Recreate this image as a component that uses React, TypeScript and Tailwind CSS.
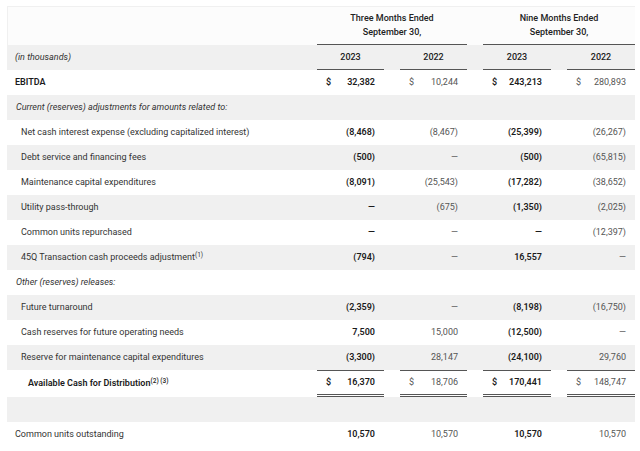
import React from 'react';

type RowProps = {
  label: React.ReactNode;
  values?: string[];
  gray?: boolean;
  indent?: number;
  italic?: boolean;
  bold?: boolean;
  dollar?: boolean;
  total?: boolean;
};

const widths = ['w-[67px]', 'w-[67px]', 'w-[68px]', 'w-[68px]'];

function Cell({ value, idx, dollar, total }: { value: string; idx: number; dollar?: boolean; total?: boolean }) {
  const strong = idx % 2 === 0;
  return (
    <div
      className={`${widths[idx]} h-full flex items-center justify-between px-[9px] ${
        strong ? 'font-semibold text-[#1b1b1b]' : 'text-[#555]'
      } ${total ? 'border-t border-b-[3px] border-double border-t-[#555] border-b-[#555]' : ''}`}
      style={total ? { borderTopStyle: 'solid' } : undefined}
    >
      <span>{dollar ? '$' : ''}</span>
      <span>{value}</span>
    </div>
  );
}

function Row({ label, values, gray, indent = 0, italic, bold, dollar, total }: RowProps) {
  const pad = ['pl-[8px]', 'pl-[9px]', 'pl-[14px]', 'pl-[21px]'][indent];
  return (
    <div className={`flex items-center ${total ? 'h-[27px]' : 'h-[25px]'} ${gray ? 'bg-[#f0f0f0]' : 'bg-white'}`}>
      <div className={`w-[310px] ${pad} ${italic ? 'italic' : ''} ${bold ? 'font-semibold text-[#1b1b1b]' : 'text-[#333]'}`}>
        {label}
      </div>
      {values ? (
        <>
          <Cell value={values[0]} idx={0} dollar={dollar} total={total} />
          <div className="w-4" />
          <Cell value={values[1]} idx={1} dollar={dollar} total={total} />
          <div className="w-4" />
          <Cell value={values[2]} idx={2} dollar={dollar} total={total} />
          <div className="w-4" />
          <Cell value={values[3]} idx={3} dollar={dollar} total={total} />
        </>
      ) : null}
    </div>
  );
}

const D = '—';

export default function App() {
  return (
    <div className="bg-white w-[640px] h-[451px] pt-[6px] pl-[7px] text-[9px] leading-none" style={{ fontFamily: 'Roboto, "Liberation Sans", sans-serif' }}>
      <div className="w-[628px]">
        {/* column group headers */}
        <div className="flex h-[39px] bg-[#fcfcfc] border-t border-l border-[#f0f0f0]">
          <div className="w-[309px]" />
          <div className="w-[150px] border-b border-[#555] flex flex-col items-center justify-center gap-[5px] font-medium text-[#222]">
            <span>Three Months Ended</span>
            <span>September 30,</span>
          </div>
          <div className="w-4" />
          <div className="w-[152px] border-b border-[#555] flex flex-col items-center justify-center gap-[5px] font-medium text-[#222]">
            <span>Nine Months Ended</span>
            <span>September 30,</span>
          </div>
        </div>

        {/* years */}
        <div className="flex items-center h-[25px] bg-[#f0f0f0]">
          <div className="w-[310px] pl-[8px] italic text-[#333]">(in thousands)</div>
          {['2023', '2022', '2023', '2022'].map((y, i) => (
            <React.Fragment key={i}>
              {i > 0 && <div className="w-4" />}
              <div className={`${widths[i]} h-full flex items-center justify-center border-b border-[#555] font-medium text-[#222]`}>{y}</div>
            </React.Fragment>
          ))}
        </div>

        <Row label="EBITDA" bold dollar values={['32,382', '10,244', '243,213', '280,893']} />
        <Row label="Current (reserves) adjustments for amounts related to:" gray italic indent={1} />
        <Row label="Net cash interest expense (excluding capitalized interest)" indent={2} values={['(8,468)', '(8,467)', '(25,399)', '(26,267)']} />
        <Row label="Debt service and financing fees" gray indent={2} values={['(500)', D, '(500)', '(65,815)']} />
        <Row label="Maintenance capital expenditures" indent={2} values={['(8,091)', '(25,543)', '(17,282)', '(38,652)']} />
        <Row label="Utility pass-through" gray indent={2} values={[D, '(675)', '(1,350)', '(2,025)']} />
        <Row label="Common units repurchased" indent={2} values={[D, D, D, '(12,397)']} />
        <Row
          label={
            <>
              45Q Transaction cash proceeds adjustment<sup className="text-[6.5px] -top-[3px]">(1)</sup>
            </>
          }
          gray
          indent={2}
          values={['(794)', D, '16,557', D]}
        />
        <Row label="Other (reserves) releases:" italic indent={1} />
        <Row label="Future turnaround" gray indent={2} values={['(2,359)', D, '(8,198)', '(16,750)']} />
        <Row label="Cash reserves for future operating needs" indent={2} values={['7,500', '15,000', '(12,500)', D]} />
        <Row label="Reserve for maintenance capital expenditures" gray indent={2} values={['(3,300)', '28,147', '(24,100)', '29,760']} />
        <Row
          label={
            <>
              Available Cash for Distribution<sup className="text-[6.5px] -top-[3px] font-medium">(2) (3)</sup>
            </>
          }
          bold
          indent={3}
          dollar
          total
          values={['16,370', '18,706', '170,441', '148,747']}
        />
        <Row label="" gray />
        <Row label="Common units outstanding" values={['10,570', '10,570', '10,570', '10,570']} />
      </div>
    </div>
  );
}
